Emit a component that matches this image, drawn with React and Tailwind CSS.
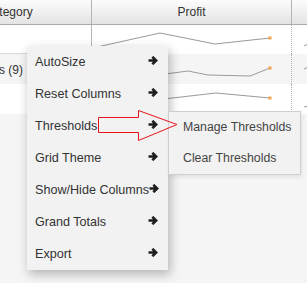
import React from 'react'

const rows = [
  { h: 'h-[29px]', bg: 'bg-white', left: '', pts: [[5, 22], [68, 8], [123, 19], [178, 13]], next: [[12, 21], [16, 19]] },
  { h: 'h-[30px]', bg: 'bg-[#f5f5f5]', left: 's (9)', pts: [[28, 26], [96, 17], [116, 21], [158, 22], [178, 14]], next: [[12, 15], [16, 13]] },
  { h: 'h-[30px]', bg: 'bg-white', left: '', pts: [[28, 20], [124, 9], [178, 14]], next: [[12, 23], [16, 22]] },
]

const menu = ['AutoSize', 'Reset Columns', 'Thresholds', 'Grid Theme', 'Show/Hide Columns', 'Grand Totals', 'Export']

function Spark({ pts, h }) {
  const last = pts[pts.length - 1]
  return (
    <svg width="199" height={h} className="block">
      <polyline points={pts.map((p) => p.join(',')).join(' ')} fill="none" stroke="#9a9a9a" strokeWidth="1" />
      <rect x={last[0] - 1.5} y={last[1] - 1.5} width="3" height="3" fill="#f4a24c" />
    </svg>
  )
}

// fa-arrow-right, drawn chunky
function Arrow() {
  return (
    <svg width="10" height="9" viewBox="0 0 10 9" className="-mt-[3px] shrink-0">
      <path d="M0.5 4.5H8M4.3 0.8L8.2 4.5L4.3 8.2" fill="none" stroke="#1e1e1e" strokeWidth="2.6" strokeLinejoin="miter" />
    </svg>
  )
}

export default function App() {
  return (
    <div className="relative h-[283px] w-[307px] overflow-hidden bg-[#f5f5f5] font-['Liberation_Sans',Arial,sans-serif] text-[12px] text-[#333]">
      {/* header */}
      <div className="flex h-[25px] border-b border-[#a9a9a9] bg-gradient-to-b from-[#fcfcfc] to-[#e3e3e3]">
        <div className="flex w-[92px] items-center overflow-hidden border-r border-[#b5b5b5]">
          <span className="-ml-[16px] whitespace-nowrap">Category</span>
        </div>
        <div className="flex w-[200px] items-center justify-center border-r border-[#b5b5b5]">Profit</div>
        <div className="flex-1" />
      </div>

      {rows.map((r, i) => (
        <div key={i} className={`flex ${r.h} ${r.bg}`}>
          <div className={`flex w-[92px] items-center overflow-hidden border-r border-[#b5b5b5] ${i === 0 ? 'border-b border-b-[#d6d6d6]' : ''}`}>
            <span className="-ml-[1px] mt-[2px] whitespace-nowrap">{r.left}</span>
          </div>
          <div className="w-[200px] border-r border-dotted border-[#b0b0b0]">
            <Spark pts={r.pts} h={i === 0 ? 29 : 30} />
          </div>
          <div className="flex-1">
            <svg width="15" height="30" className="block">
              <polyline points={r.next.map((p) => p.join(',')).join(' ')} fill="none" stroke="#9a9a9a" strokeWidth="1" />
            </svg>
          </div>
        </div>
      ))}

      {/* context menu */}
      <div className="absolute left-[27px] top-[46px] w-[141px] bg-[#f2f2f2] text-[12.6px] shadow-[2px_4px_10px_rgba(0,0,0,0.28)]">
        {menu.map((m) => (
          <div key={m} className="flex h-[32px] items-center justify-between pl-[8px] pr-[10px] whitespace-nowrap">
            <span>{m}</span>
            <Arrow />
          </div>
        ))}
      </div>

      {/* submenu */}
      <div className="absolute left-[168px] top-[111px] w-[133px] border border-[#cfcfcf] bg-[#f2f2f2] text-[12.3px] text-[#444] shadow-[1px_2px_4px_rgba(0,0,0,0.08)]">
        <div className="flex h-[31px] items-center pl-[14px]">Manage Thresholds</div>
        <div className="flex h-[31px] items-center pl-[14px]">Clear Thresholds</div>
      </div>

      {/* red callout arrow */}
      <svg width="307" height="283" className="pointer-events-none absolute left-0 top-0">
        <polygon points="98.5,117.5 138.5,117.5 138.5,110.5 177,124.5 138.5,140.5 138.5,132.5 98.5,132.5" fill="none" stroke="#e8141c" strokeWidth="1" />
      </svg>
    </div>
  )
}
